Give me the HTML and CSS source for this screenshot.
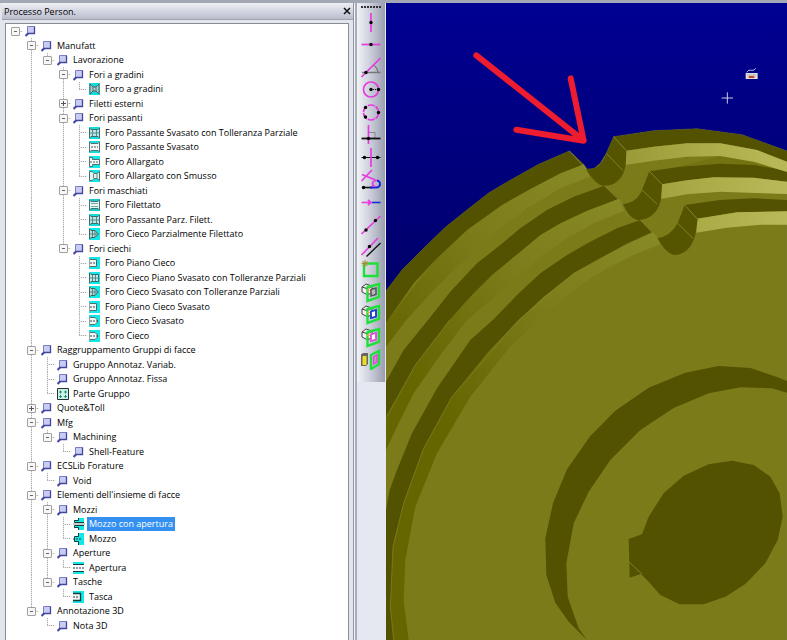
FILE: index.html
```html
<!DOCTYPE html>
<html lang="it">
<head>
<meta charset="utf-8">
<title>Processo Person.</title>
<link rel="stylesheet" href="styles.css">
</head>
<body>
<svg class="defs" aria-hidden="true">
  <symbol id="node" viewBox="0 0 12 12"><path d="M3.500 8 .5 11" stroke="#4a4aa8" stroke-width="2.200"/><path d="M2.500 1.500h7v7h-7z" fill="#c9ccf2" stroke="#7c7dc6"/><path d="M2 8.500h7.500v-7" fill="none" stroke="#44459c" stroke-width="1.300"/></symbol>
  <symbol id="step" viewBox="0 0 12 12"><path d="M0 0h11v12H0z" fill="#16dcdc"/><path d="M1 1l3 3h3l3-3v10L7 8H4l-3 3z" fill="#b9c9c9" stroke="#3a6868"/><path d="M4 3v6M7 3v6" stroke="#577"/></symbol>
  <symbol id="tol" viewBox="0 0 12 12"><path d="M0 0h11v12H0z" fill="#16dcdc"/><path d="M.5 1 2 2.500h7L10.500 1v10L9 9.500H2L.5 11z" fill="#c4e4e4" stroke="#3a7070"/><path d="M3.500 3v6M7.500 3v6M1 6h9" stroke="#4c9090"/></symbol>
  <symbol id="through" viewBox="0 0 12 12"><path d="M0 0h11v12H0z" fill="#16dcdc"/><path d="M.5 1 2 2.500h7L10.500 1v10L9 9.500H2L.5 11z" fill="#f3f6f6" stroke="#557070"/><path d="M2 6h7" stroke="#555" stroke-dasharray="2 1"/></symbol>
  <symbol id="wide" viewBox="0 0 12 12"><path d="M0 0h11v12H0z" fill="#12e8e8"/><path d="M.5 1.500h3v2h7v5h-7v2h-3z" fill="#f3f6f6" stroke="#557070"/><path d="M1 6h9" stroke="#666" stroke-dasharray="2 1"/></symbol>
  <symbol id="widecham" viewBox="0 0 12 12"><path d="M0 0h11v12H0z" fill="#12e8e8"/><path d="M.5 1.500h3l1.500 2h3l2.500-2v9l-2.500-2H5l-1.500 2h-3z" fill="#e4f0f0" stroke="#457575"/><path d="M4.500 4v4M8 4v4" stroke="#688"/></symbol>
  <symbol id="thread" viewBox="0 0 12 12"><path d="M0 0h11v12H0z" fill="#16c8c8"/><path d="M.5 1 2 2.500h7L10.500 1v10L9 9.500H2L.5 11z" fill="#eaf5f2" stroke="#3c7474"/><path d="M2 4.500h7M2 7.500h7" stroke="#70aaa6"/></symbol>
  <symbol id="threadblind" viewBox="0 0 12 12"><path d="M0 0h11v12H0z" fill="#12e8e8"/><path d="M.5 1 2 2.500h4L9 6 6 9.500H2L.5 11z" fill="#bcdcdc" stroke="#346666"/><path d="M3.500 3v6M6 3v6M1 6h9" stroke="#588"/></symbol>
  <symbol id="flat" viewBox="0 0 12 12"><path d="M0 0h11v12H0z" fill="#12e8e8"/><path d="M0 2.500h7.500v7H0" fill="#f3f6f6" stroke="#507070"/><path d="M.5 1v10" stroke="#8aa"/><path d="M1 6h7" stroke="#444" stroke-dasharray="2 1"/></symbol>
  <symbol id="flattol" viewBox="0 0 12 12"><path d="M0 0h11v12H0z" fill="#12e8e8"/><path d="M.5 1 2 2.500h7.500v7H2L.5 11z" fill="#c8e6e6" stroke="#346a6a"/><path d="M3.500 3v6M6.500 3v6M1 6h9" stroke="#588"/></symbol>
  <symbol id="blind" viewBox="0 0 12 12"><path d="M0 0h11v12H0z" fill="#12e8e8"/><path d="M0 2.500h6L8.500 5v2L6 9.500H0" fill="#f3f6f6" stroke="#507070"/><path d="M.5 1v10" stroke="#8aa"/><path d="M1 6h8" stroke="#444" stroke-dasharray="2 1"/></symbol>
  <symbol id="group" viewBox="0 0 12 12"><path d="M.5.5h11v11H.5z" fill="#c9f3e6" stroke="#24332f"/><path d="M2 4h3M3.500 2.500v3M7 4h3M8.500 2.500v3M2 8.500h3M3.500 7v3M7 8.500h3M8.500 7v3" stroke="#2f8f78"/></symbol>
  <symbol id="hubopen" viewBox="0 0 12 12"><path d="M5 0h6v4H1V2h4zM1 8h10v4H5v-2H1z" fill="#12e8e8"/><path d="M5.500 0v2.500h-4V4.500H11M11 7.500H1.500v2h4V12" fill="none" stroke="#143c3c"/><path d="M0 6h12" stroke="#999"/></symbol>
  <symbol id="hub" viewBox="0 0 12 12"><path d="M5 0h6v12H5V9H1V4h4z" fill="#12e8e8"/><path d="M5.500 0v3.500h-4v5h4V12" fill="none" stroke="#143c3c"/><path d="M0 6h8" stroke="#333" stroke-dasharray="2 1"/></symbol>
  <symbol id="opening" viewBox="0 0 12 12"><path d="M0 0h11v3H0zM0 9h11v3H0z" fill="#12e8e8"/><path d="M0 2.500h11M0 9.500h11" stroke="#143c3c"/><path d="M0 6h12" stroke="#333" stroke-dasharray="2 1"/></symbol>
  <symbol id="pocket" viewBox="0 0 12 12"><path d="M0 0h11v12H0z" fill="#12e8e8"/><path d="M0 2.500h7.500v7H0" fill="#f3f6f6" stroke="#143c3c" stroke-width="1.300"/><path d="M0 6h6" stroke="#333" stroke-dasharray="2 1"/></symbol>
  <symbol id="cube" viewBox="0 0 22 22"><path d="M2 6l4-3 6 2v6l-4 3-6-3zM2 6l6 2 4-3M8 8v6" fill="#f2f2f2" stroke="#444"/><path d="M7.500 6 19 3v13L7.500 20z" fill="none" stroke="#1fe03a" stroke-width="2.400"/><path d="M6 9.500h5M8.500 7v5" stroke="#c8b850"/></symbol>
</svg>

<main class="app">
  <section class="dock">
    <header class="titlebar">
      <h1>Processo Person.</h1>
      <button class="close" aria-label="Chiudi"><svg viewBox="0 0 8 8"><path d="M1 1l6 6M7 1 1 7" stroke="#111" stroke-width="1.500"/></svg></button>
    </header>
    <ul class="tree">
      <li><button class="tg" aria-label="Comprimi"></button><svg><use href="#node"/></svg></li>
      <li><i></i><button class="tg down up" aria-label="Comprimi"></button><svg><use href="#node"/></svg><span>Manufatt</span></li>
      <li><i></i><i class="v"></i><button class="tg up" aria-label="Comprimi"></button><svg><use href="#node"/></svg><span>Lavorazione</span></li>
      <li><i></i><i class="v"></i><i></i><button class="tg up down" aria-label="Comprimi"></button><svg><use href="#node"/></svg><span>Fori a gradini</span></li>
      <li><i></i><i class="v"></i><i></i><i class="v"></i><i class="e"></i><svg><use href="#step"/></svg><span>Foro a gradini</span></li>
      <li><i></i><i class="v"></i><i></i><button class="tg plus up down" aria-label="Espandi"></button><svg><use href="#node"/></svg><span>Filetti esterni</span></li>
      <li><i></i><i class="v"></i><i></i><button class="tg up down" aria-label="Comprimi"></button><svg><use href="#node"/></svg><span>Fori passanti</span></li>
      <li><i></i><i class="v"></i><i></i><i class="v"></i><i class="t"></i><svg><use href="#tol"/></svg><span>Foro Passante Svasato con Tolleranza Parziale</span></li>
      <li><i></i><i class="v"></i><i></i><i class="v"></i><i class="t"></i><svg><use href="#through"/></svg><span>Foro Passante Svasato</span></li>
      <li><i></i><i class="v"></i><i></i><i class="v"></i><i class="t"></i><svg><use href="#wide"/></svg><span>Foro Allargato</span></li>
      <li><i></i><i class="v"></i><i></i><i class="v"></i><i class="e"></i><svg><use href="#widecham"/></svg><span>Foro Allargato con Smusso</span></li>
      <li><i></i><i class="v"></i><i></i><button class="tg up down" aria-label="Comprimi"></button><svg><use href="#node"/></svg><span>Fori maschiati</span></li>
      <li><i></i><i class="v"></i><i></i><i class="v"></i><i class="t"></i><svg><use href="#thread"/></svg><span>Foro Filettato</span></li>
      <li><i></i><i class="v"></i><i></i><i class="v"></i><i class="t"></i><svg><use href="#tol"/></svg><span>Foro Passante Parz. Filett.</span></li>
      <li><i></i><i class="v"></i><i></i><i class="v"></i><i class="e"></i><svg><use href="#threadblind"/></svg><span>Foro Cieco Parzialmente Filettato</span></li>
      <li><i></i><i class="v"></i><i></i><button class="tg up" aria-label="Comprimi"></button><svg><use href="#node"/></svg><span>Fori ciechi</span></li>
      <li><i></i><i class="v"></i><i></i><i></i><i class="t"></i><svg><use href="#flat"/></svg><span>Foro Piano Cieco</span></li>
      <li><i></i><i class="v"></i><i></i><i></i><i class="t"></i><svg><use href="#flattol"/></svg><span>Foro Cieco Piano Svasato con Tolleranze Parziali</span></li>
      <li><i></i><i class="v"></i><i></i><i></i><i class="t"></i><svg><use href="#threadblind"/></svg><span>Foro Cieco Svasato con Tolleranze Parziali</span></li>
      <li><i></i><i class="v"></i><i></i><i></i><i class="t"></i><svg><use href="#flat"/></svg><span>Foro Piano Cieco Svasato</span></li>
      <li><i></i><i class="v"></i><i></i><i></i><i class="t"></i><svg><use href="#blind"/></svg><span>Foro Cieco Svasato</span></li>
      <li><i></i><i class="v"></i><i></i><i></i><i class="e"></i><svg><use href="#blind"/></svg><span>Foro Cieco</span></li>
      <li><i></i><button class="tg up down" aria-label="Comprimi"></button><svg><use href="#node"/></svg><span>Raggruppamento Gruppi di facce</span></li>
      <li><i></i><i class="v"></i><i class="t"></i><svg><use href="#node"/></svg><span>Gruppo Annotaz. Variab.</span></li>
      <li><i></i><i class="v"></i><i class="t"></i><svg><use href="#node"/></svg><span>Gruppo Annotaz. Fissa</span></li>
      <li><i></i><i class="v"></i><i class="e"></i><svg><use href="#group"/></svg><span>Parte Gruppo</span></li>
      <li><i></i><button class="tg plus up down" aria-label="Espandi"></button><svg><use href="#node"/></svg><span>Quote&amp;Toll</span></li>
      <li><i></i><button class="tg up down" aria-label="Comprimi"></button><svg><use href="#node"/></svg><span>Mfg</span></li>
      <li><i></i><i class="v"></i><button class="tg up" aria-label="Comprimi"></button><svg><use href="#node"/></svg><span>Machining</span></li>
      <li><i></i><i class="v"></i><i></i><i class="e"></i><svg><use href="#node"/></svg><span>Shell-Feature</span></li>
      <li><i></i><button class="tg up down" aria-label="Comprimi"></button><svg><use href="#node"/></svg><span>ECSLib Forature</span></li>
      <li><i></i><i class="v"></i><i class="e"></i><svg><use href="#node"/></svg><span>Void</span></li>
      <li><i></i><button class="tg up down" aria-label="Comprimi"></button><svg><use href="#node"/></svg><span>Elementi dell'insieme di facce</span></li>
      <li><i></i><i class="v"></i><button class="tg up down" aria-label="Comprimi"></button><svg><use href="#node"/></svg><span>Mozzi</span></li>
      <li><i></i><i class="v"></i><i class="v"></i><i class="t"></i><svg><use href="#hubopen"/></svg><span class="selected">Mozzo con apertura</span></li>
      <li><i></i><i class="v"></i><i class="v"></i><i class="e"></i><svg><use href="#hub"/></svg><span>Mozzo</span></li>
      <li><i></i><i class="v"></i><button class="tg up down" aria-label="Comprimi"></button><svg><use href="#node"/></svg><span>Aperture</span></li>
      <li><i></i><i class="v"></i><i class="v"></i><i class="e"></i><svg><use href="#opening"/></svg><span>Apertura</span></li>
      <li><i></i><i class="v"></i><button class="tg up" aria-label="Comprimi"></button><svg><use href="#node"/></svg><span>Tasche</span></li>
      <li><i></i><i class="v"></i><i></i><i class="e"></i><svg><use href="#pocket"/></svg><span>Tasca</span></li>
      <li><i></i><button class="tg up" aria-label="Comprimi"></button><svg><use href="#node"/></svg><span>Annotazione 3D</span></li>
      <li><i></i><i></i><i class="e"></i><svg><use href="#node"/></svg><span>Nota 3D</span></li>
    </ul>
  </section>

  <aside class="rail">
    <div class="toolbar">
      <button aria-label="Verticale"><svg viewBox="0 0 22 22"><path class="m" d="M11 2v19"/><circle cx="11" cy="11.500" r="1.700"/></svg></button>
      <button aria-label="Orizzontale"><svg viewBox="0 0 22 22"><path class="m" d="M1.500 11.500h19"/><circle cx="11" cy="11.500" r="1.700"/></svg></button>
      <button aria-label="Angolo"><svg viewBox="0 0 22 22"><path d="M2 16.500h18.500M13 9q4 2 5 7" fill="none" stroke="#777" stroke-width="1.300"/><path class="m" d="M1.500 21l19-19"/><circle cx="6" cy="16.500" r="1.700"/></svg></button>
      <button aria-label="Centro e raggio"><svg viewBox="0 0 22 22"><circle class="m" cx="11" cy="11.500" r="7.500"/><path class="k" d="M11 11.500h7" stroke-dasharray="1 1"/><circle cx="11" cy="11.500" r="1.700"/><circle cx="18.500" cy="11.500" r="1.700"/></svg></button>
      <button aria-label="Tre punti"><svg viewBox="0 0 22 22"><circle class="m" cx="11" cy="11.500" r="7.500" stroke-dasharray="7 1"/><circle cx="18.500" cy="11.500" r="1.700"/><circle cx="5.500" cy="6.500" r="1.700"/><circle cx="5.500" cy="16" r="1.700"/></svg></button>
      <button aria-label="Perpendicolare"><svg viewBox="0 0 22 22"><path d="M9 9.500h6v6" fill="none" stroke="#888"/><path class="k" d="M1.500 15.500h19" stroke-width="1.800"/><path class="m" d="M8.500 2v19"/><circle cx="8.500" cy="15.500" r="1.700"/></svg></button>
      <button aria-label="Asse"><svg viewBox="0 0 22 22"><path class="k" d="M1.500 11.500h19"/><path class="m" d="M11 2v19"/><circle cx="4.500" cy="11.500" r="1.700"/><circle cx="17.500" cy="11.500" r="1.700"/></svg></button>
      <button aria-label="Tangente"><svg viewBox="0 0 22 22"><path class="k" d="M3.500 19.500h9" stroke-width="1.600"/><path d="M10 19.500h6a3.500 3.500 0 0 0 1-7" fill="none" stroke="#1222d8" stroke-width="1.900"/><path class="m" d="M12 2 1.500 13M2 6.500l13.500 5.500M17 12.500q-4 0-4.500 3 0 3 3 3"/><circle cx="3.500" cy="19.500" r="1.700"/></svg></button>
      <button aria-label="Prolunga"><svg viewBox="0 0 22 22"><path class="m" d="M1.500 11.500H11M8 9l3 2.500L8 14"/><path d="M12 11.500h8.500" stroke="#1230d8" stroke-width="1.600"/></svg></button>
      <button aria-label="Due punti"><svg viewBox="0 0 22 22"><path class="m" d="M1.500 21l19-18"/><circle cx="6" cy="17" r="1.700"/><circle cx="15.500" cy="7.500" r="1.700"/></svg></button>
      <button aria-label="Parallela"><svg viewBox="0 0 22 22"><path class="m" d="M1.500 19 18 2"/><path class="k" d="M6.500 20.500l14-13.500" stroke-width="1.400"/><circle cx="9.500" cy="10.500" r="1.700"/></svg></button>
      <button aria-label="Piano"><svg viewBox="0 0 22 22"><path d="M4 5.500h13.500V18H4z" fill="none" stroke="#1fe03a" stroke-width="2.400"/><path d="M1.500 5.500h7M5 2v7M2.500 3l5 5M7.500 3l-5 5" stroke="#b08a3a"/></svg></button>
      <button aria-label="Piano su faccia"><svg viewBox="0 0 22 22"><use href="#cube"/><path d="M11 8.500 16 7v6.500L11 15z" fill="#bbb" stroke="#555" stroke-width="1.500"/></svg></button>
      <button aria-label="Piano su contorno"><svg viewBox="0 0 22 22"><use href="#cube"/><path d="M11 8.500 16 7v6.500L11 15z" fill="#fff" stroke="#1238d0" stroke-width="1.800"/></svg></button>
      <button aria-label="Piano su profilo"><svg viewBox="0 0 22 22"><use href="#cube"/><path d="M11 8.500 16 7v6.500L11 15z" fill="#fff" stroke="#e04ad8" stroke-width="1.800"/></svg></button>
      <button aria-label="Piano di sezione"><svg viewBox="0 0 22 22"><path d="M1 6.500 3 5h5v11l-2 2H1z" fill="#666"/><path d="M2.500 8h4v9h-4z" fill="#f2dc22"/><path d="M11 7l8-4v13l-8 5z" fill="none" stroke="#1fe03a" stroke-width="2.400"/><path d="M13.500 9 17 7v7l-3.500 2z" fill="#c995c9" stroke="#e04ad8" stroke-width="1.500"/></svg></button>
    </div>
  </aside>

  <svg class="scene" viewBox="-3 9 1203 1911" preserveAspectRatio="xMinYMin slice" role="img" aria-label="Modello 3D">
    <defs>
      <linearGradient id="sky" x1="0" y1="0" x2="0" y2="1"><stop offset="0" stop-color="#000092"/><stop offset="1" stop-color="#000064"/></linearGradient>
      <linearGradient id="cham" gradientUnits="userSpaceOnUse" x1="700" y1="560" x2="60" y2="1150"><stop offset="0" stop-color="#888a25"/><stop offset=".45" stop-color="#7d7e1b"/><stop offset=".85" stop-color="#6a6a07"/><stop offset="1" stop-color="#666600"/></linearGradient>
      <linearGradient id="lite" gradientUnits="userSpaceOnUse" x1="715" y1="0" x2="1200" y2="0"><stop offset="0" stop-color="#9a9b38"/><stop offset=".5" stop-color="#acad48"/><stop offset="1" stop-color="#b9b95a"/></linearGradient>
    </defs>
    <path fill="url(#sky)" d="M-3 9h1203v1000H-3z"/>
    <path fill="#7b7b19" stroke="#85854d" d="M-3 873 45 810 110 745 175 682 240 630 305 579 350 552 455 493 547 453 590 493 600 507 620 506 640 490 658 460 680 410 800 392 930 386 1065 404 1200 453V1925H-5z"/>
    <g fill="url(#cham)">
      <path d="M590 493 520 520 430 567 345 615 240 690 150 775 80 860-3 969V1040L60 958 140 870 220 790 320 700 420 625 520 565 608 530z"/>
      <path d="M695 596 600 632 520 670 460 705 400 755 315 825 250 890 190 958 85 1095-3 1250V1350L30 1280 80 1180 160 1065 240 960 300 910 370 850 460 770 540 715 620 670 712 632z"/>
      <path d="M797 697 720 732 640 775 560 820 470 890 395 960 300 1060 195 1190 110 1345 50 1510 18 1640 10 1820 20 1920H65L50 1800 55 1680 85 1520 150 1360 250 1190 370 1040 455 960 500 920 580 855 660 805 740 765 820 732z"/>
    </g>
    <path fill="#737312" d="M870 500 1000 469 1100 487 1200 517V512L1100 497 1000 491z"/>
    <g fill="#525200">
      <path d="M-3 873 45 810 110 745 175 682 240 630 305 579 350 552 455 493 547 453 590 493 520 520 430 567 345 615 240 690 150 775 80 850-3 969z"/>
      <path d="M652 557 560 590 480 630 400 685 340 735 270 790 190 875 125 958 50 1050-3 1145V1250L85 1095 190 958 250 890 315 825 400 755 460 705 520 670 600 632 695 596z"/>
      <path d="M760 660 690 685 610 725 540 765 460 820 390 885 320 958 250 1020 150 1165 75 1300 30 1410 8 1470-3 1530V1920H20L10 1820 18 1640 50 1510 110 1345 195 1190 300 1060 395 960 470 890 560 820 640 775 720 732 797 697z"/>
      <path d="M680 410 800 392 930 386 1065 404 1200 453V485L1110 450 1000 430 900 430 800 440 718 452z"/>
      <path d="M787 514 880 500 1000 491 1100 495 1200 512V545L1100 533 980 532 900 541 825 553z"/>
      <path d="M893 615 1000 600 1100 595 1200 600V634L1050 637 930 656z"/>
      <path d="M1200 1143 1170 1131 1090 1104 995 1098 895 1118 785 1163 685 1232 610 1308 540 1408 498 1510 475 1615 478 1725 505 1808 545 1865 600 1920 575 1885 542 1790 538 1690 560 1570 605 1475 670 1380 760 1290 860 1224 965 1180 1060 1162 1155 1165 1200 1178z"/>
      <path d="M765 1603 785 1550 830 1480 890 1427 965 1393 1035 1382 1100 1395 1150 1430 1178 1480 1187 1550 1172 1620 1135 1690 1075 1752 1015 1790 950 1813 878 1813 820 1785 785 1745 762 1722 728 1733 725 1617z"/>
    </g>
    <g fill="url(#lite)">
      <path d="M718 452 800 440 900 430 1000 430 1110 450 1200 485V516L1100 485 1000 468 900 470 800 482 715 495z"/>
      <path d="M825 553 900 541 980 532 1100 533 1200 545V582L1000 575 900 583 820 597z"/>
      <path d="M930 656 1050 637 1200 634V674H1120L1020 683 928 698z"/>
    </g>
    <g fill="#555500">
      <path d="M680 410 718 452 716 495Q706 556 650 558 625 555 597 507 640 512 658 460z"/>
      <path d="M787 514 825 553 822 600Q806 660 750 660 725 653 708 612 750 608 765 570z"/>
      <path d="M893 615 932 658 925 705Q908 765 860 765 832 756 812 714 850 710 872 670z"/>
    </g>
    <path d="M680 410l38 42M658 460l50 52M787 514l38 39M765 570l45 42M893 615l39 43M872 670l46 45M725 1685l40 37M547 453l50 54M652 557l56 55M760 660l52 54" fill="none" stroke="#969646" stroke-width="2"/>
    <path d="M797 697 720 732 560 820 395 960 195 1190 110 1345 50 1510 18 1640 10 1820 20 1920M0 1250 85 1095 190 958" fill="none" stroke="#85852b" stroke-width="2"/>
    <path d="M268 166 590 422M551 235l39 187L388 389" fill="none" stroke="#ed1c2e" stroke-width="18" stroke-linecap="round" stroke-linejoin="round"/>
    <path d="M1004 294h34M1021 277v34" stroke="#c9cce0" stroke-width="3"/>
    <path d="M1076 219h36v18h-36z" fill="#e0ddd8"/><path d="M1080 217c4-9 10-6 14-6s8 0 12-6" fill="none" stroke="#ddd" stroke-width="3"/><path d="M1081 225h26" stroke="#999" stroke-width="3" stroke-dasharray="4 2"/><path d="M1085 231h17" stroke="#c04a30" stroke-width="6"/>
  </svg>
</main>
</body>
</html>
```
FILE: styles.css
```css
* { box-sizing: border-box; }

body {
  margin: 0;
  font-family: "Open Sans", "Noto Sans", sans-serif;
  font-size: 9px;
  color: #000;
}

.defs {
  position: absolute;
  width: 0;
  height: 0;
}

button {
  padding: 0;
  border: 0;
  background: none;
}

.app {
  display: flex;
  height: 100vh;
  border-top: 3px solid #a4a8b5;
  background: #b5b9c5;
}

.dock {
  display: flex;
  flex-direction: column;
  flex: 0 0 45%;
  min-width: 0;
  padding-left: 2px;
  border-right: 1px solid #9296a4;
  background: #e3e5ec;
}

.titlebar {
  display: flex;
  align-items: center;
  justify-content: space-between;
  height: 17px;
  padding: 0 2px;
  border-bottom: 1px solid #a1a4af;
  background: linear-gradient(#eff0f5, #b9bdcd);
}

.titlebar h1 {
  margin: 0;
  font-size: 9px;
  font-weight: 400;
}

.close {
  display: flex;
}

.close svg {
  width: 8px;
  height: 8px;
}

.tree {
  display: grid;
  grid-auto-rows: 14px 15px;
  flex: 1;
  align-content: start;
  min-height: 0;
  margin: 3px 4px 0 3px;
  padding: 0 0 0 1px;
  overflow: hidden;
  list-style: none;
  border: 1px solid #898c95;
  border-bottom: 0;
  background: #fff;
}

.tree li {
  display: flex;
  align-items: center;
  line-height: 14px;
  white-space: nowrap;
}

.tree svg {
  flex: none;
  width: 12px;
  height: 12px;
  margin: 0 2px;
}

.tree span {
  padding: 0 2px;
}

.tree .selected {
  background: #3390f0;
  color: #fff;
}

.tree i,
.tg {
  flex: none;
  align-self: stretch;
  width: 16px;
  --line: repeating-linear-gradient(#b2b2b2 0 1px, #e4e4e4 1px 2px);
  --dash: repeating-linear-gradient(90deg, #b2b2b2 0 1px, #e4e4e4 1px 2px);
  background-repeat: no-repeat;
}

.v {
  background-image: var(--line);
  background-size: 1px 100%;
  background-position: 8px 0;
}

.t {
  background-image: var(--line), var(--dash);
  background-size: 1px 100%, 8px 1px;
  background-position: 8px 0, 8px 7px;
}

.e {
  background-image: var(--line), var(--dash);
  background-size: 1px 7px, 8px 1px;
  background-position: 8px 0, 8px 7px;
}

.tg {
  display: grid;
  place-items: center;
  padding-left: 1px;
  background-image: var(--dash);
  background-size: 6px 1px;
  background-position: 12px 7px;
}

.tg.up {
  background-image: var(--dash), var(--line);
  background-size: 6px 1px, 1px 7px;
  background-position: 12px 7px, 8px 0;
}

.tg.up.down {
  background-size: 6px 1px, 1px 100%;
}

.tg::before {
  content: "";
  width: 7px;
  height: 7px;
  border: 1px solid #a0a0a0;
  border-radius: 1px;
  background: linear-gradient(#666, #666) center / 3px 1px no-repeat, #f7f7f7;
}

.tg.plus::before {
  background: linear-gradient(#555, #555) center / 5px 1px no-repeat, linear-gradient(#555, #555) center / 1px 5px no-repeat, #f7f7f7;
}

.rail {
  flex: 0 0 32px;
  padding: 0 1px 0 2px;
  border-left: 1px solid #f4f5f8;
  background: linear-gradient(90deg, #a9adba 0 2px, #e5e8f1 2px);
}

.toolbar {
  display: grid;
  grid-auto-rows: 22px 23px;
  justify-items: center;
  align-content: start;
  padding: 8px 0 11px;
  background: linear-gradient(90deg, #f2f3f7, #c9ccd8 50%, #9a9eae);
}

.toolbar::before {
  content: "";
  position: absolute;
  width: 20px;
  height: 2px;
  margin-top: -5px;
  background: repeating-linear-gradient(90deg, #333 0 2px, transparent 2px 3px);
}

.toolbar button {
  display: flex;
}

.toolbar svg {
  width: 22px;
  height: 22px;
}

.m {
  fill: none;
  stroke: #e83ae0;
  stroke-width: 1.7;
}

.k {
  fill: none;
  stroke: #111;
}

.scene {
  display: block;
  flex: 1;
  min-width: 0;
  height: 100%;
}
```
